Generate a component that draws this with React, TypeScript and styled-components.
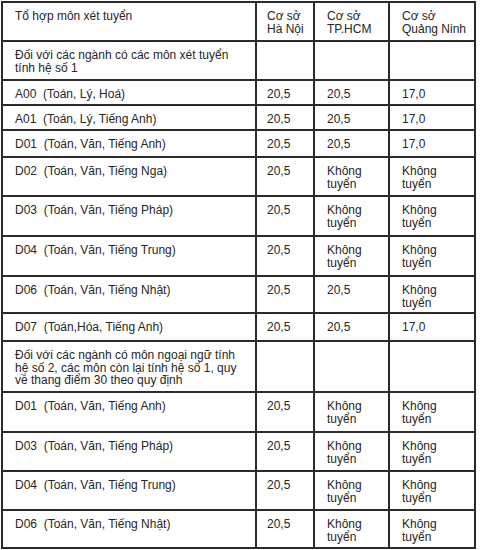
import styled, { createGlobalStyle } from "styled-components";

const GlobalStyle = createGlobalStyle`
  html, body {
    margin: 0;
    padding: 0;
    background: #ffffff;
  }
  body {
    font-family: "Liberation Sans", Arial, sans-serif;
    color: #262626;
  }
`;

const KT = "Không\ntuyển";

const rows: { h: number; cells: string[] }[] = [
  { h: 39, cells: ["Tổ hợp môn xét tuyển", "Cơ sở\nHà Nội", "Cơ sở\nTP.HCM", "Cơ sở\nQuảng Ninh"] },
  { h: 39, cells: ["Đối với các ngành có các môn xét tuyển\ntính hệ số 1", "", "", ""] },
  { h: 25, cells: ["A00  (Toán, Lý, Hoá)", "20,5", "20,5", "17,0"] },
  { h: 25, cells: ["A01  (Toán, Lý, Tiếng Anh)", "20,5", "20,5", "17,0"] },
  { h: 27, cells: ["D01  (Toán, Văn, Tiếng Anh)", "20,5", "20,5", "17,0"] },
  { h: 39, cells: ["D02  (Toán, Văn, Tiếng Nga)", "20,5", KT, KT] },
  { h: 40, cells: ["D03  (Toán, Văn, Tiếng Pháp)", "20,5", KT, KT] },
  { h: 40, cells: ["D04  (Toán, Văn, Tiếng Trung)", "20,5", KT, KT] },
  { h: 37, cells: ["D06  (Toán, Văn, Tiếng Nhật)", "20,5", "20,5", KT] },
  { h: 28, cells: ["D07  (Toán,Hóa, Tiếng Anh)", "20,5", "20,5", "17,0"] },
  {
    h: 51,
    cells: [
      "Đối với các ngành có môn ngoại ngữ tính\nhệ số 2, các môn còn lại tính hệ số 1, quy\nvề thang điểm 30 theo quy định",
      "",
      "",
      "",
    ],
  },
  { h: 40, cells: ["D01  (Toán, Văn, Tiếng Anh)", "20,5", KT, KT] },
  { h: 39, cells: ["D03  (Toán, Văn, Tiếng Pháp)", "20,5", KT, KT] },
  { h: 39, cells: ["D04  (Toán, Văn, Tiếng Trung)", "20,5", KT, KT] },
  { h: 38, cells: ["D06  (Toán, Văn, Tiếng Nhật)", "20,5", KT, KT] },
];

const colWidths = [254, 58, 75, 86];

const Table = styled.table`
  margin: 1px 0 0 1px;
  border-collapse: separate;
  border-spacing: 0;
  table-layout: fixed;
  border-left: 2px solid #2b2b2b;
  border-top: 2px solid #2b2b2b;
  font-size: 12px;
  line-height: 12.5px;
`;

const Row = styled.tr<{ $h: number }>`
  height: ${({ $h }) => $h}px;
`;

const Cell = styled.td<{ $w: number; $pl: number }>`
  box-sizing: border-box;
  width: ${({ $w }) => $w}px;
  padding: 7px 4px 0 ${({ $pl }) => $pl}px;
  vertical-align: top;
  white-space: pre-wrap;
  border-right: 2px solid #2b2b2b;
  border-bottom: 2px solid #2b2b2b;
`;

const App = () => {
  return (
    <>
      <GlobalStyle />
      <Table>
        <colgroup>
          {colWidths.map((w, i) => (
            <col key={i} style={{ width: w }} />
          ))}
        </colgroup>
        <tbody>
          {rows.map((row, r) => (
            <Row key={r} $h={row.h}>
              {row.cells.map((text, c) => (
                <Cell key={c} $w={colWidths[c]} $pl={c === 1 ? 10 : 12}>
                  {text}
                </Cell>
              ))}
            </Row>
          ))}
        </tbody>
      </Table>
    </>
  );
};

export default App;
